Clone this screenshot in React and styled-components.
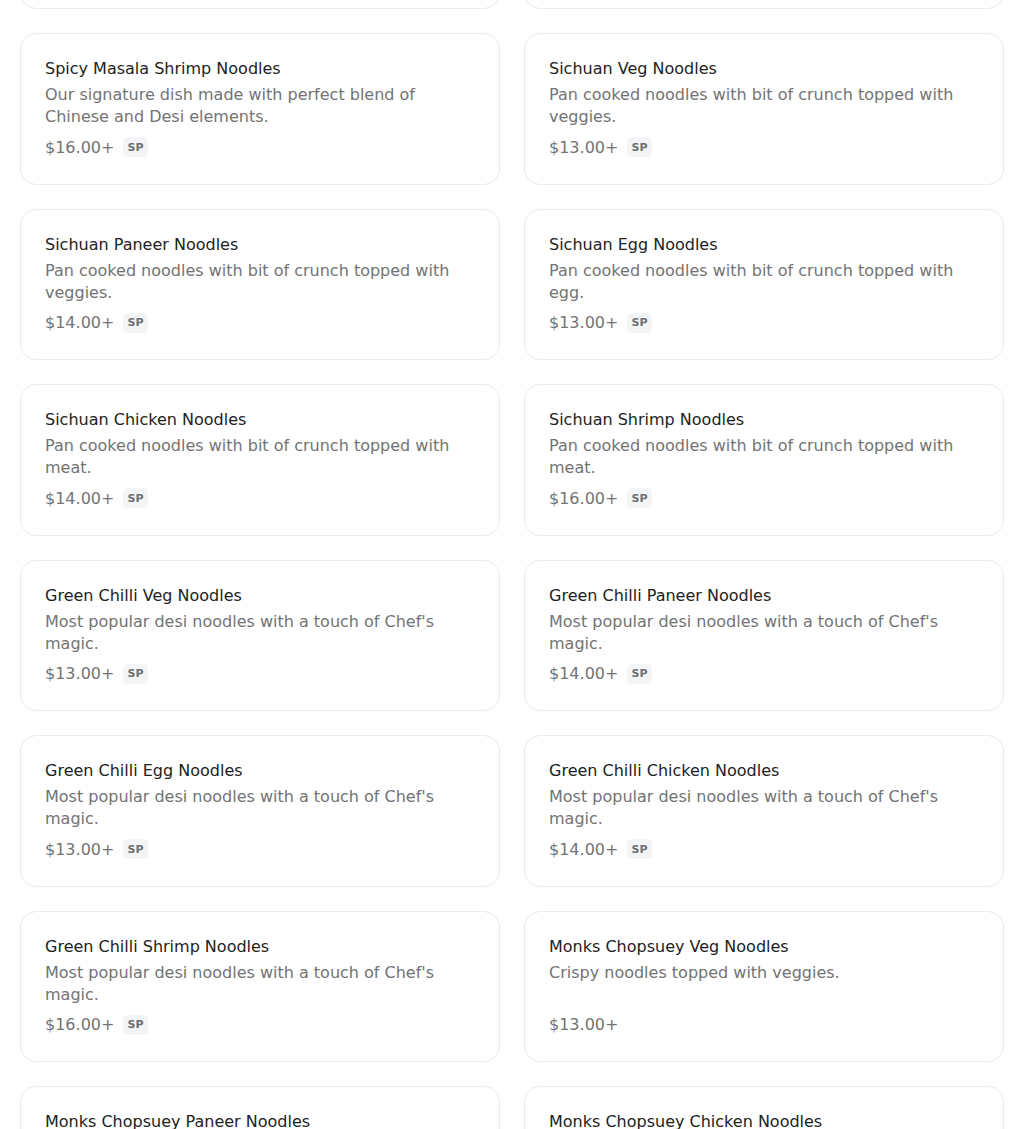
import React from "react";
import styled, { createGlobalStyle } from "styled-components";

const GlobalStyle = createGlobalStyle`
  * { box-sizing: border-box; }
  body {
    margin: 0;
    background: #fff;
    font-family: "DejaVu Sans", Verdana, sans-serif;
    overflow: hidden;
  }
`;

const items = [
  { name: "Sichuan Mixed Noodles", desc: "Pan cooked noodles with bit of crunch topped with meat.", price: "$16.00+", sp: true },
  { name: "Sichuan Mixed Noodles", desc: "Pan cooked noodles with bit of crunch topped with meat.", price: "$16.00+", sp: true },
  { name: "Spicy Masala Shrimp Noodles", desc: "Our signature dish made with perfect blend of Chinese and Desi elements.", price: "$16.00+", sp: true },
  { name: "Sichuan Veg Noodles", desc: "Pan cooked noodles with bit of crunch topped with veggies.", price: "$13.00+", sp: true },
  { name: "Sichuan Paneer Noodles", desc: "Pan cooked noodles with bit of crunch topped with veggies.", price: "$14.00+", sp: true },
  { name: "Sichuan Egg Noodles", desc: "Pan cooked noodles with bit of crunch topped with egg.", price: "$13.00+", sp: true },
  { name: "Sichuan Chicken Noodles", desc: "Pan cooked noodles with bit of crunch topped with meat.", price: "$14.00+", sp: true },
  { name: "Sichuan Shrimp Noodles", desc: "Pan cooked noodles with bit of crunch topped with meat.", price: "$16.00+", sp: true },
  { name: "Green Chilli Veg Noodles", desc: "Most popular desi noodles with a touch of Chef's magic.", price: "$13.00+", sp: true },
  { name: "Green Chilli Paneer Noodles", desc: "Most popular desi noodles with a touch of Chef's magic.", price: "$14.00+", sp: true },
  { name: "Green Chilli Egg Noodles", desc: "Most popular desi noodles with a touch of Chef's magic.", price: "$13.00+", sp: true },
  { name: "Green Chilli Chicken Noodles", desc: "Most popular desi noodles with a touch of Chef's magic.", price: "$14.00+", sp: true },
  { name: "Green Chilli Shrimp Noodles", desc: "Most popular desi noodles with a touch of Chef's magic.", price: "$16.00+", sp: true },
  { name: "Monks Chopsuey Veg Noodles", desc: "Crispy noodles topped with veggies.", price: "$13.00+", sp: false },
  { name: "Monks Chopsuey Paneer Noodles", desc: "Crispy noodles topped with veggies.", price: "$14.00+", sp: false },
  { name: "Monks Chopsuey Chicken Noodles", desc: "Crispy noodles topped with chicken.", price: "$14.00+", sp: false },
];

// the list is scrolled: the first row shows only its bottom edge
const Page = styled.div`
  padding: 0 20px;
  margin-top: -142.5px;
`;

const Grid = styled.div`
  display: grid;
  grid-template-columns: 1fr 1fr;
  gap: 24px;
`;

const Card = styled.div`
  border: 1px solid #ebebeb;
  border-radius: 16px;
  padding: 24px;
  height: 151.5px;
  display: flex;
  flex-direction: column;
  background: #fff;
`;

const Title = styled.div`
  font-size: 16px;
  line-height: 21px;
  color: #222;
  white-space: nowrap;
`;

const Desc = styled.div`
  margin-top: 5px;
  font-size: 16px;
  line-height: 22px;
  color: #737373;
  min-height: 44px;
  padding-right: 20px;
`;

const PriceRow = styled.div`
  display: flex;
  align-items: center;
  gap: 9px;
  margin-top: 7px;
  height: 24px;
`;

const Price = styled.span`
  font-size: 16px;
  color: #737373;
`;

const Badge = styled.span`
  display: inline-flex;
  align-items: center;
  justify-content: center;
  height: 20px;
  padding: 0 4px;
  border-radius: 5px;
  background: #f3f4f6;
  color: #6b6f76;
  font-size: 11px;
  font-weight: 700;
  letter-spacing: 0.3px;
`;

export default function App() {
  return (
    <>
      <GlobalStyle />
      <Page>
        <Grid>
          {items.map((it, i) => (
            <Card key={i}>
              <Title>{it.name}</Title>
              <Desc>{it.desc}</Desc>
              <PriceRow>
                <Price>{it.price}</Price>
                {it.sp && <Badge>SP</Badge>}
              </PriceRow>
            </Card>
          ))}
        </Grid>
      </Page>
    </>
  );
}
